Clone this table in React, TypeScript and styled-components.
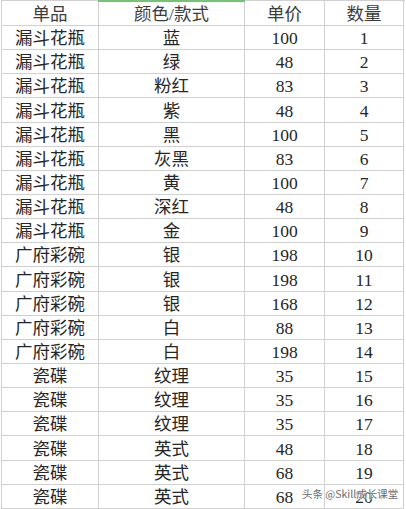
import React from "react";
import styled, { createGlobalStyle } from "styled-components";

const Global = createGlobalStyle`
  html, body { margin: 0; padding: 0; background: #ffffff; }
  body { font-family: "Liberation Serif", "Noto Sans CJK SC", serif; }
`;

const Page = styled.div`
  position: relative;
  width: 406px;
  height: 509px;
  overflow: hidden;
  background: #fff;
`;

const Sheet = styled.div`
  display: grid;
  grid-template-columns: 97px 146px 80px 79px;
  grid-template-rows: 25px repeat(20, 24.15px);
  margin-left: 1px;
  width: 403px;
  border-left: 1px solid #d0d0d0;
  border-top: 1px solid #d0d0d0;
`;

const Cell = styled.div<{ $header?: boolean; $selected?: boolean }>`
  display: flex;
  align-items: flex-end;
  justify-content: center;
  padding-bottom: 1px;
  box-sizing: border-box;
  border-right: 1px solid #d0d0d0;
  border-bottom: 1px solid #d0d0d0;
  font-size: 17.5px;
  line-height: 20px;
  color: ${(p) => (p.$header ? "#3c3c3c" : "#262626")};
  white-space: nowrap;
  position: relative;
  ${(p) =>
    p.$selected
      ? `&::before { content: ""; position: absolute; left: -1px; right: -1px; top: -1px; height: 2px; background: #7ac07a; }`
      : ""}
`;

const Watermark = styled.div`
  position: absolute;
  left: 302px;
  top: 487px;
  font-family: "Noto Sans CJK SC", "Liberation Sans", sans-serif;
  font-size: 10.5px;
  line-height: 14px;
  color: #6a6a6a;
  text-shadow: 0 0 2px #fff, 0 0 2px #fff, 0 0 1px #fff;
  white-space: nowrap;
`;

const rows: [string, string, string, string][] = [
  ["漏斗花瓶", "蓝", "100", "1"],
  ["漏斗花瓶", "绿", "48", "2"],
  ["漏斗花瓶", "粉红", "83", "3"],
  ["漏斗花瓶", "紫", "48", "4"],
  ["漏斗花瓶", "黑", "100", "5"],
  ["漏斗花瓶", "灰黑", "83", "6"],
  ["漏斗花瓶", "黄", "100", "7"],
  ["漏斗花瓶", "深红", "48", "8"],
  ["漏斗花瓶", "金", "100", "9"],
  ["广府彩碗", "银", "198", "10"],
  ["广府彩碗", "银", "198", "11"],
  ["广府彩碗", "银", "168", "12"],
  ["广府彩碗", "白", "88", "13"],
  ["广府彩碗", "白", "198", "14"],
  ["瓷碟", "纹理", "35", "15"],
  ["瓷碟", "纹理", "35", "16"],
  ["瓷碟", "纹理", "35", "17"],
  ["瓷碟", "英式", "48", "18"],
  ["瓷碟", "英式", "68", "19"],
  ["瓷碟", "英式", "68", "20"],
];

export default function App() {
  return (
    <Page>
      <Global />
      <Sheet>
        <Cell $header>单品</Cell>
        <Cell $header $selected>颜色/款式</Cell>
        <Cell $header>单价</Cell>
        <Cell $header>数量</Cell>
        {rows.map((r, i) => (
          <React.Fragment key={i}>
            <Cell>{r[0]}</Cell>
            <Cell>{r[1]}</Cell>
            <Cell>{r[2]}</Cell>
            <Cell>{r[3]}</Cell>
          </React.Fragment>
        ))}
      </Sheet>
      <Watermark>头条 @Skill成长课堂</Watermark>
    </Page>
  );
}
